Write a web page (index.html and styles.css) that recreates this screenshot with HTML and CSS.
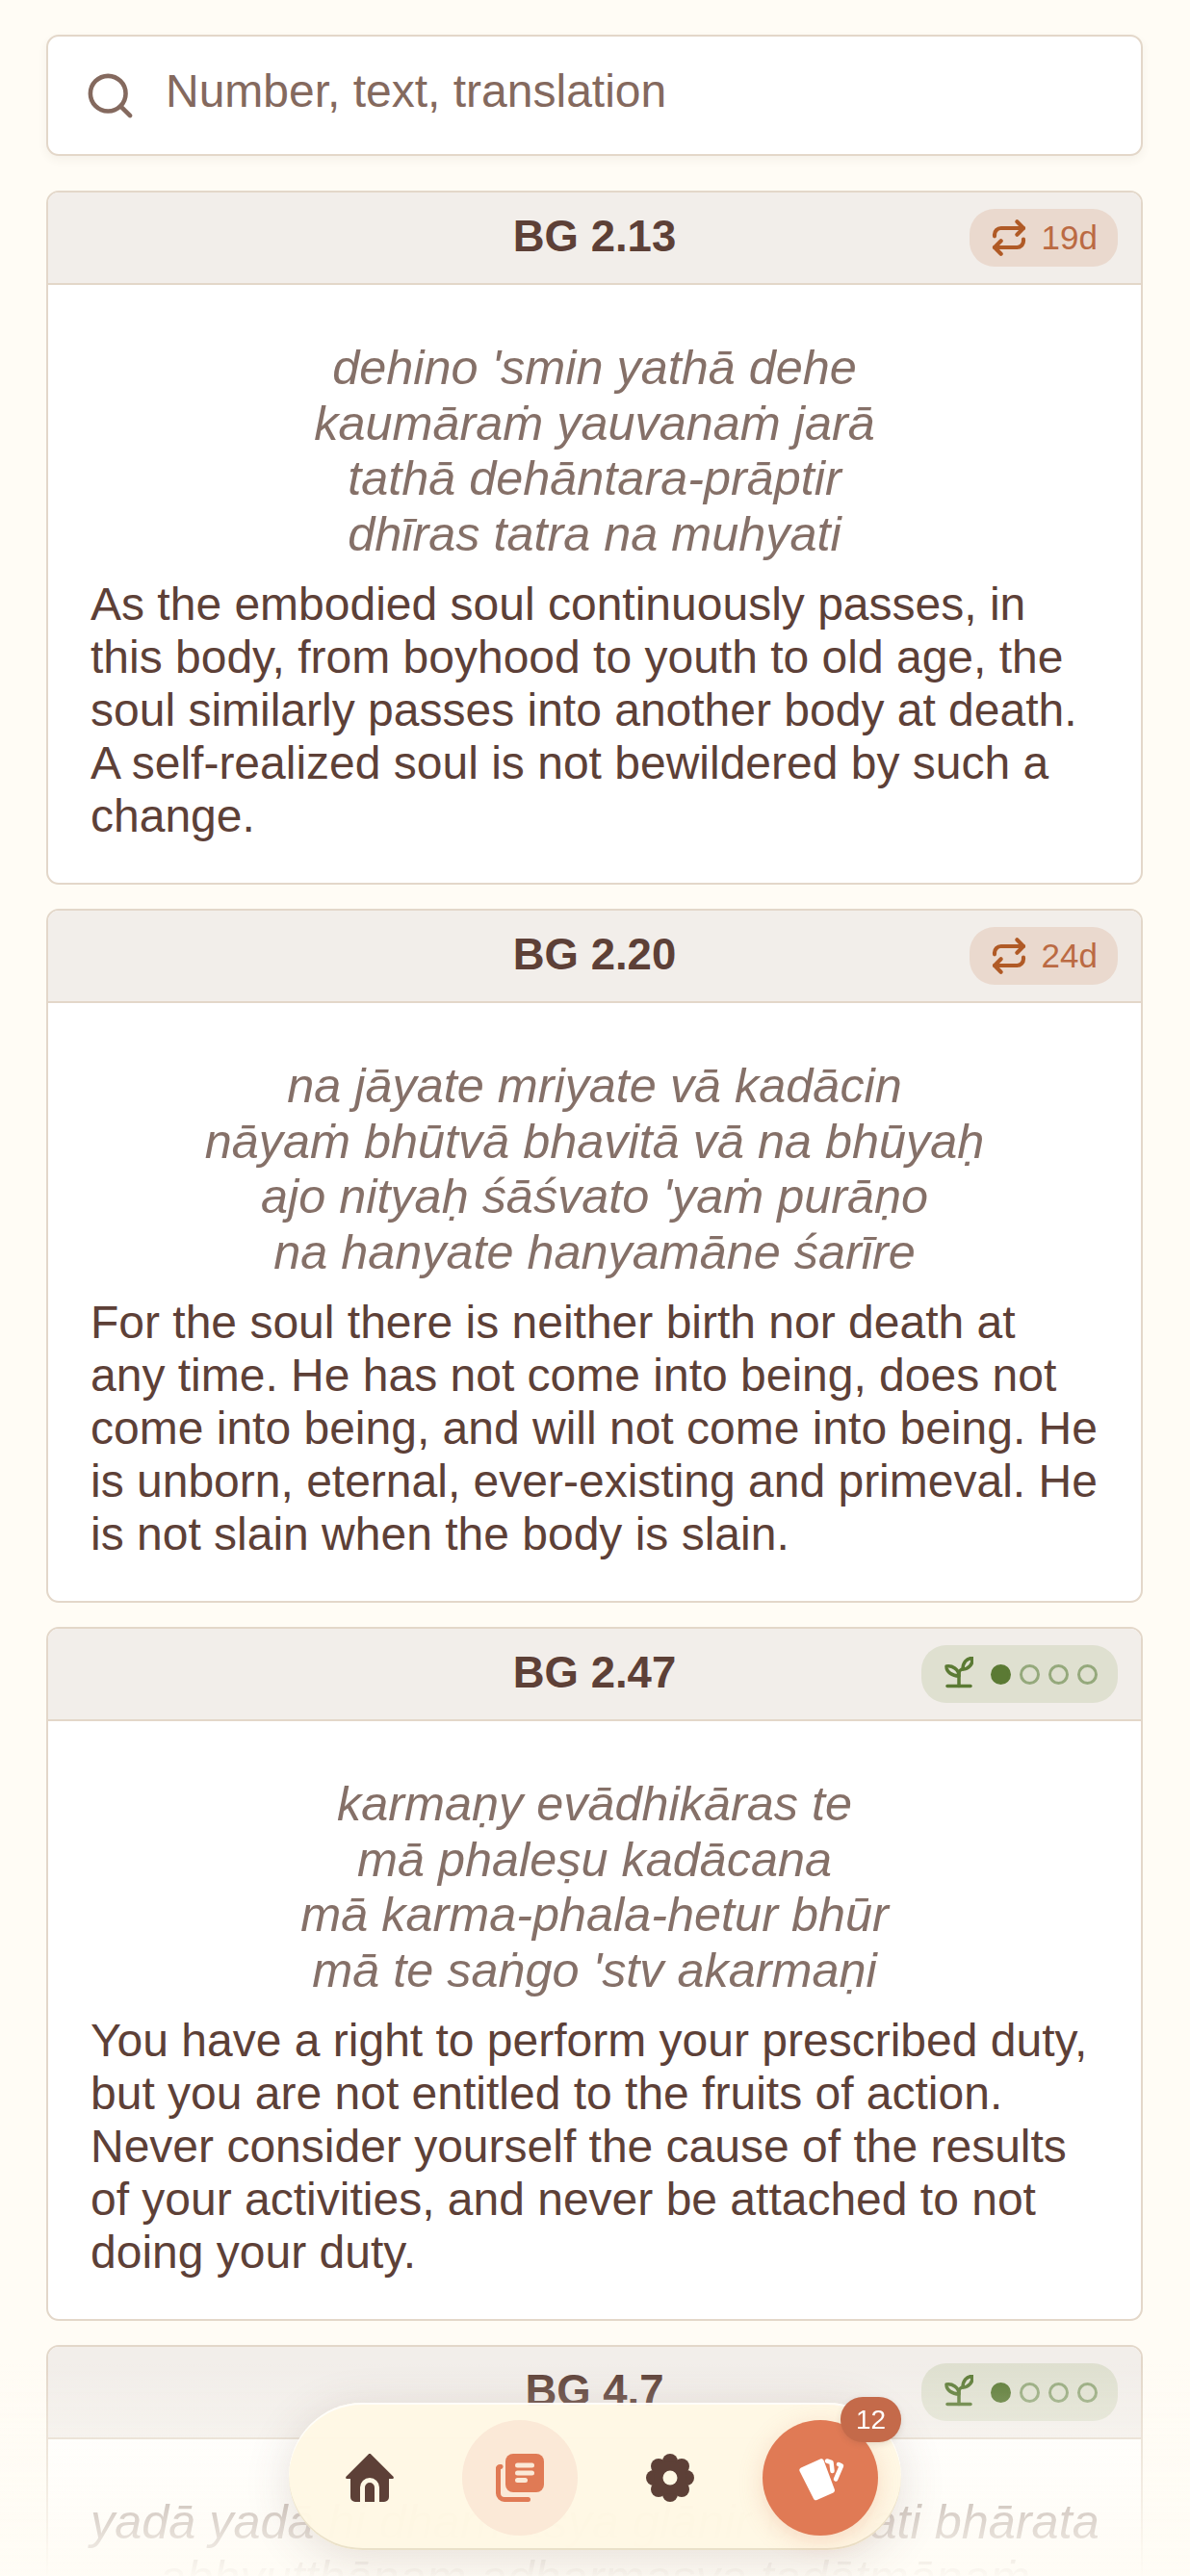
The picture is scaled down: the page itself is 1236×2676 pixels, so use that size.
FILE: index.html
```html
<!DOCTYPE html>
<html lang="en">
<head>
    <meta charset="UTF-8">
    <meta name="viewport" content="width=device-width, initial-scale=1.0">
    <title>Verses</title>
    <link rel="stylesheet" href="styles.css">
</head>
<body>
    <div class="page">
        <div class="search">
            <svg class="search-icon" viewBox="0 0 24 24"><circle cx="11" cy="11" r="8"/><path d="m21 21-4.3-4.3"/></svg>
            <span class="search-text">Number, text, translation</span>
        </div>

        <div class="card">
            <div class="card-header">
                <span class="card-title">BG 2.13</span>
                <span class="pill pill-due">
                    <svg class="repeat-icon" viewBox="0 0 24 24"><path d="m17 2 4 4-4 4"/><path d="M3 11v-1a4 4 0 0 1 4-4h14"/><path d="m7 22-4-4 4-4"/><path d="M21 13v1a4 4 0 0 1-4 4H3"/></svg>
                    <span class="pill-text">19d</span>
                </span>
            </div>
            <div class="card-body">
                <div class="verse">
                    <div>dehino 'smin yathā dehe</div>
                    <div>kaumāraṁ yauvanaṁ jarā</div>
                    <div>tathā dehāntara-prāptir</div>
                    <div>dhīras tatra na muhyati</div>
                </div>
                <p class="translation">As the embodied soul continuously passes, in this body, from boyhood to youth to old age, the soul similarly passes into another body at death. A self-realized soul is not bewildered by such a change.</p>
            </div>
        </div>

        <div class="card">
            <div class="card-header">
                <span class="card-title">BG 2.20</span>
                <span class="pill pill-due">
                    <svg class="repeat-icon" viewBox="0 0 24 24"><path d="m17 2 4 4-4 4"/><path d="M3 11v-1a4 4 0 0 1 4-4h14"/><path d="m7 22-4-4 4-4"/><path d="M21 13v1a4 4 0 0 1-4 4H3"/></svg>
                    <span class="pill-text">24d</span>
                </span>
            </div>
            <div class="card-body">
                <div class="verse">
                    <div>na jāyate mriyate vā kadācin</div>
                    <div>nāyaṁ bhūtvā bhavitā vā na bhūyaḥ</div>
                    <div>ajo nityaḥ śāśvato 'yaṁ purāṇo</div>
                    <div>na hanyate hanyamāne śarīre</div>
                </div>
                <p class="translation">For the soul there is neither birth nor death at any time. He has not come into being, does not come into being, and will not come into being. He is unborn, eternal, ever-existing and primeval. He is not slain when the body is slain.</p>
            </div>
        </div>

        <div class="card">
            <div class="card-header">
                <span class="card-title">BG 2.47</span>
                <span class="pill pill-new">
                    <svg class="sprout-icon" viewBox="0 0 30 33"><path d="M3 30.500h24"/><path d="M15 30.500V18c0-3 2-5 4-5"/><path d="M15 20C15 13 8 9 2 10c0 6 6 10 13 10z"/><path d="M19 13c0-7 4-11.500 10-11.500C29.500 8 25 13 19 13z"/></svg>
                    <span class="dot dot-on"></span><span class="dot"></span><span class="dot"></span><span class="dot"></span>
                </span>
            </div>
            <div class="card-body">
                <div class="verse">
                    <div>karmaṇy evādhikāras te</div>
                    <div>mā phaleṣu kadācana</div>
                    <div>mā karma-phala-hetur bhūr</div>
                    <div>mā te saṅgo 'stv akarmaṇi</div>
                </div>
                <p class="translation">You have a right to perform your prescribed duty, but you are not entitled to the fruits of action. Never consider yourself the cause of the results of your activities, and never be attached to not doing your duty.</p>
            </div>
        </div>

        <div class="card">
            <div class="card-header">
                <span class="card-title">BG 4.7</span>
                <span class="pill pill-new">
                    <svg class="sprout-icon" viewBox="0 0 30 33"><path d="M3 30.500h24"/><path d="M15 30.500V18c0-3 2-5 4-5"/><path d="M15 20C15 13 8 9 2 10c0 6 6 10 13 10z"/><path d="M19 13c0-7 4-11.500 10-11.500C29.500 8 25 13 19 13z"/></svg>
                    <span class="dot dot-on"></span><span class="dot"></span><span class="dot"></span><span class="dot"></span>
                </span>
            </div>
            <div class="card-body">
                <div class="verse">
                    <div>yadā yadā hi dharmasya glānir bhavati bhārata</div>
                    <div>abhyutthānam adharmasya tadātmānaṁ</div>
                </div>
            </div>
        </div>
    </div>

    <div class="fade"></div>

    <nav class="nav">
        <div class="nav-item">
            <svg class="nav-icon" viewBox="0 0 50 50"><path fill-rule="evenodd" d="M23.500.7a2 2 0 0 1 3 0L49.500 23.800c.8.900.2 2.200-1 2.200H45v19a5 5 0 0 1-5 5H35V35a10 10 0 0 0-20 0v15H10a5 5 0 0 1-5-5V26H1.500c-1.200 0-1.800-1.300-1-2.200zM20 35a5 5 0 0 1 10 0v15H20z"/></svg>
        </div>
        <div class="nav-item nav-item-active">
            <svg class="nav-icon" viewBox="0 0 50 50">
                <path class="stack-back" d="M5 13.500a2 2 0 0 0-2.500 2.500V41a6.500 6.500 0 0 0 6.500 6.500H33.500"/>
                <rect x="10" y="0" width="40" height="40" rx="8"/>
                <rect class="stack-line" x="20" y="9.500" width="20" height="5" rx="2.500"/>
                <rect class="stack-line" x="20" y="17.500" width="20" height="5" rx="2.500"/>
                <rect class="stack-line" x="20" y="25" width="13" height="5" rx="2.500"/>
            </svg>
        </div>
        <div class="nav-item">
            <svg class="nav-icon" viewBox="0 0 50 50">
                <circle cx="25" cy="8" r="8"/><circle cx="25" cy="42" r="8"/><circle cx="8" cy="25" r="8"/><circle cx="42" cy="25" r="8"/>
                <circle cx="13" cy="13" r="8"/><circle cx="37" cy="13" r="8"/><circle cx="13" cy="37" r="8"/><circle cx="37" cy="37" r="8"/>
                <circle cx="25" cy="25" r="17"/>
                <circle class="gear-hole" cx="25" cy="25" r="7.500"/>
            </svg>
        </div>
        <div class="nav-item nav-item-cards">
            <svg class="nav-icon" viewBox="0 0 50 50">
                <path class="card-shape" d="M5 14.500 25 5.500c1.500-.7 3 0 3.600 1.500l11.200 30c.5 1.400 0 2.800-1.300 3.400L21.500 48c-1.500.7-3 0-3.600-1.500L3.500 18c-.6-1.500 0-2.800 1.500-3.500z"/>
                <path class="card-edge" d="M32 7.500l4.500 1.500 1 9"/>
                <path class="card-edge" d="M44 11l3 1.500-6 14"/>
            </svg>
            <span class="badge">12</span>
        </div>
    </nav>
</body>
</html>
```

FILE: styles.css
```css
html, body {
    margin: 0;
    height: 2676px;
    overflow: hidden;
}
body {
    font-family: 'Liberation Sans', Arial, sans-serif;
    background-color: #fffcf5;
    color: #5d4037;
}
.page {
    padding: 36px 49px 0 48px;
}

.search {
    display: flex;
    align-items: center;
    gap: 30px;
    height: 126px;
    box-sizing: border-box;
    padding: 0 0 10px 37px;
    background-color: white;
    border: 2.625px solid #e3d7c9;
    border-radius: 13px;
    box-shadow: 0 4px 10px rgba(93,64,55,0.06);
    margin-bottom: 36px;
}
.search-icon {
    width: 55px;
    height: 55px;
    fill: none;
    stroke: #84695e;
    stroke-width: 2;
    stroke-linecap: round;
    stroke-linejoin: round;
    margin-top: 10px;
}
.search-text {
    font-size: 48px;
    color: #84695e;
}

.card {
    background-color: white;
    border: 2.625px solid #e3d7c9;
    border-radius: 13px;
    overflow: hidden;
    margin-bottom: 25px;
}
.card-header {
    display: flex;
    align-items: center;
    justify-content: flex-end;
    position: relative;
    height: 94px;
    padding-right: 24px;
    background-color: #f2eeea;
    border-bottom: 2.625px solid #e3d7c9;
}
.card-title {
    position: absolute;
    left: 0;
    right: 0;
    top: 20px;
    text-align: center;
    font-size: 45.5px;
    line-height: 52px;
    font-weight: bold;
    color: #5d4037;
}
.pill {
    display: flex;
    align-items: center;
    height: 60px;
    box-sizing: border-box;
    padding: 0 21px;
    border-radius: 26px;
}
.pill-due {
    background-color: #ead9ce;
    gap: 13.500px;
}
.pill-new {
    background-color: #dfe0d0;
    gap: 9px;
    padding-left: 24px;
}
.pill-text {
    font-size: 35px;
    color: #bb6a43;
}
.repeat-icon {
    width: 40px;
    height: 40px;
    fill: none;
    stroke: #b05a26;
    stroke-width: 2.5;
    stroke-linecap: round;
    stroke-linejoin: round;
}
.sprout-icon {
    width: 30px;
    height: 33px;
    margin-right: 9px;
    margin-top: -3px;
    fill: none;
    stroke: #5b7a34;
    stroke-width: 3.5;
    stroke-linecap: round;
    stroke-linejoin: round;
}
.dot {
    width: 21px;
    height: 21px;
    box-sizing: border-box;
    border-radius: 50%;
    border: 3px solid #95a97c;
}
.dot-on {
    background-color: #5b7a34;
    border-color: #5b7a34;
}

.card-body {
    padding: 57px 44px 42px;
}
.verse {
    text-align: center;
    font-style: italic;
    font-size: 50.4px;
    line-height: 57.5px;
    color: #857068;
    white-space: nowrap;
    margin-bottom: 17px;
}
.translation {
    margin: 0;
    font-size: 48px;
    line-height: 55px;
    color: #5d4037;
}

/* content fades out behind the bottom nav */
.fade {
    position: fixed;
    left: 0;
    right: 0;
    bottom: 0;
    height: 220px;
    background: linear-gradient(to bottom, rgba(255,252,245,0), rgba(255,252,245,0.98));
}

.nav {
    position: fixed;
    left: 300px;
    bottom: 27px;
    display: flex;
    gap: 36px;
    padding: 18px 24px 15px;
    background-color: rgba(255,248,228,0.96);
    border-radius: 77px;
    box-shadow: inset 0 2px 0 rgba(255,255,255,0.8), inset 0 -2px 0 rgba(225,215,190,0.7), 0 8px 48px rgba(93,64,55,0.16);
}
.nav-item {
    position: relative;
    display: flex;
    align-items: center;
    justify-content: center;
    width: 120px;
    height: 120px;
    border-radius: 50%;
}
.nav-icon {
    width: 50px;
    height: 50px;
    fill: #5d4037;
}
.gear-hole {
    fill: #fff8e4;
}
.nav-item-active {
    background-color: #fbe9d7;
}
.nav-item-active .nav-icon {
    fill: #e07a55;
}
.stack-back {
    fill: none;
    stroke: #e07a55;
    stroke-width: 5;
    stroke-linecap: round;
}
.nav-item-active .stack-line {
    fill: #fbe9d7;
}
.nav-item-cards {
    background-color: #e07a55;
    box-shadow: 0 6px 24px rgba(224,122,85,0.25);
}
.nav-item-cards .card-shape {
    fill: white;
}
.card-edge {
    fill: none;
    stroke: white;
    stroke-width: 4.500;
    stroke-linecap: round;
    stroke-linejoin: round;
}
.badge {
    position: absolute;
    top: -24px;
    right: -24px;
    width: 63px;
    height: 47px;
    border-radius: 23px;
    background-color: #c46a4a;
    color: white;
    font-size: 28px;
    line-height: 47px;
    text-align: center;
    box-shadow: 0 2px 6px rgba(93,64,55,0.15);
}
```
